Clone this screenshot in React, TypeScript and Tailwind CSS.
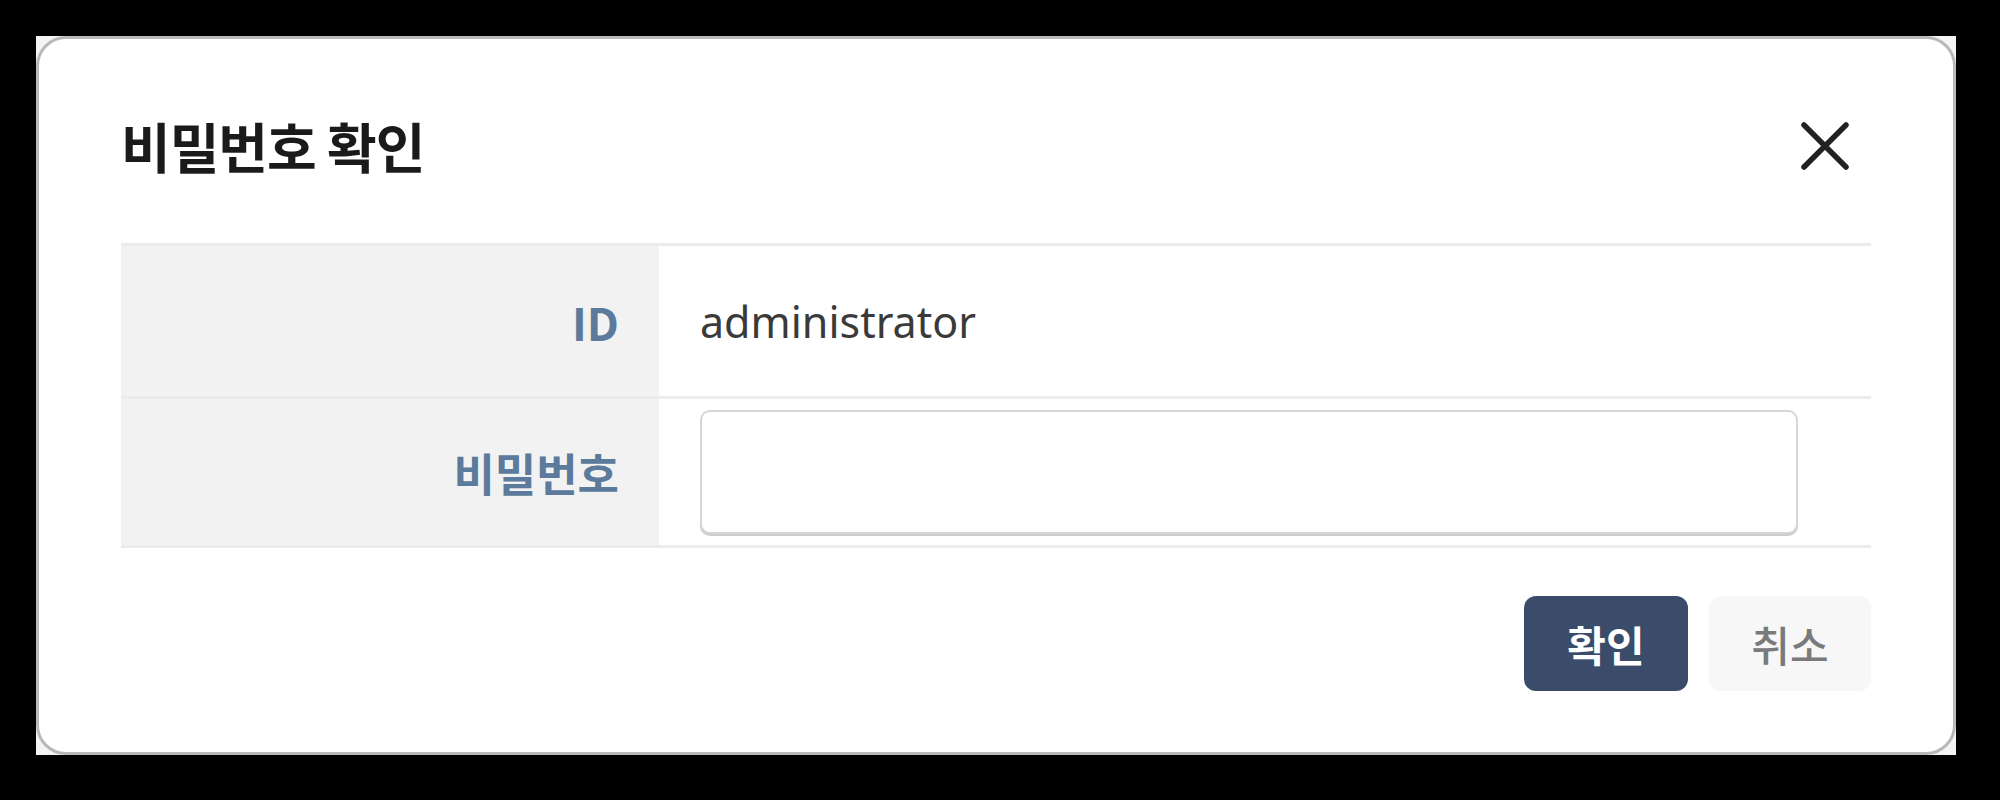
function CloseIcon() {
  return (
    <svg width="48" height="48" viewBox="0 0 48 48" className="text-[#222]">
      <path d="M3 3 L45 45 M45 3 L3 45" stroke="currentColor" strokeWidth="5.5" strokeLinecap="round" fill="none" />
    </svg>
  )
}

function Row({ label, children, height }: { label: string; children: React.ReactNode; height: string }) {
  return (
    <div className={`flex border-b-[3px] border-[#ebebeb] ${height}`}>
      <div className="w-[538px] shrink-0 bg-[#f2f2f2] flex items-center justify-end pr-[40px]">
        <span className="text-[45px] font-bold text-[#5b7a9c] leading-none">{label}</span>
      </div>
      <div className="flex-1 flex items-center pl-[41px] pr-[73px]">{children}</div>
    </div>
  )
}

export default function App() {
  return (
    <div className="w-[2000px] h-[800px] bg-black pt-[36px] pl-[36px] font-['Noto_Sans_CJK_KR','Noto_Sans',sans-serif]">
      <div className="w-[1920px] h-[719px] bg-[#f4f4f4]">
        <div className="w-full h-full bg-white rounded-[30px] border-[3px] border-[#b9b9b9] px-[82px] flex flex-col">
          {/* header */}
          <div className="flex items-center justify-between h-[100px] mt-[57px]">
            <h2 className="text-[54px] font-bold text-[#1a1a1a] leading-none tracking-[-1px]">비밀번호 확인</h2>
            <button className="mr-[22px] flex items-center justify-center">
              <CloseIcon />
            </button>
          </div>

          {/* form table */}
          <div className="mt-[47px] border-t-[3px] border-[#ebebeb]">
            <Row label="ID" height="h-[153px]">
              <span className="text-[43px] text-[#3a3a3a] leading-none font-['Noto_Sans',sans-serif]">administrator</span>
            </Row>
            <Row label="비밀번호" height="h-[149px]">
              <input
                type="password"
                className="w-full h-[124px] rounded-[10px] border-2 border-[#d6d6d6] shadow-[0_2px_0_#cccccc] bg-white outline-none px-4"
              />
            </Row>
          </div>

          {/* actions */}
          <div className="flex justify-end gap-[21px] mt-[48px]">
            <button className="w-[164px] h-[95px] rounded-[12px] bg-[#3b4c6b] text-white text-[42px] font-bold">확인</button>
            <button className="w-[162px] h-[95px] rounded-[12px] bg-[#f7f7f7] text-[#7a7a7a] text-[42px] font-medium">취소</button>
          </div>
        </div>
      </div>
    </div>
  )
}
